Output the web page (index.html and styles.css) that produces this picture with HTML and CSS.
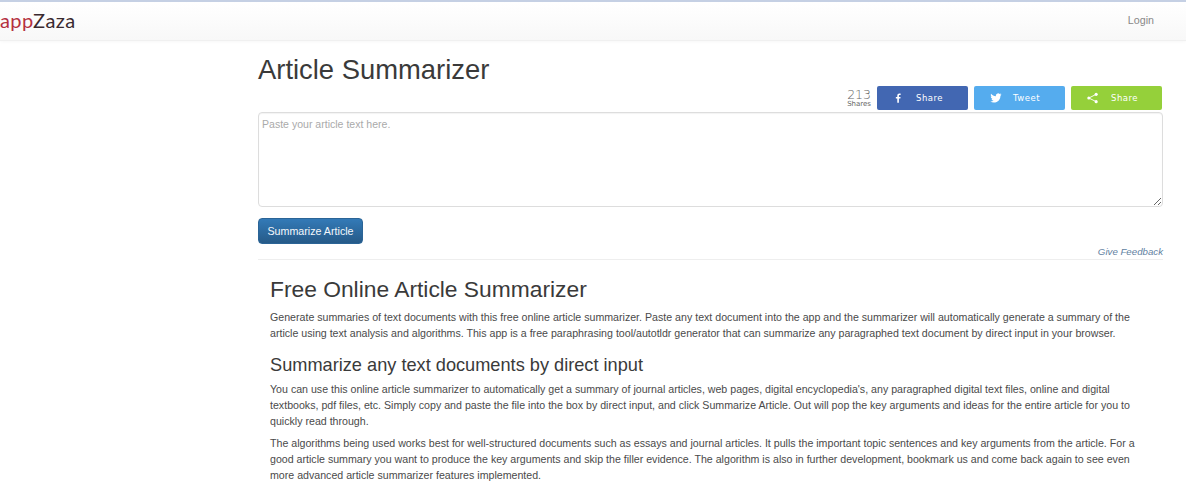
FILE: index.html
```html
<!DOCTYPE html>
<html lang="en">
<head>
<meta charset="utf-8">
<title>Article Summarizer</title>
<link rel="stylesheet" href="styles.css">
</head>
<body>
<nav class="navbar">
  <a class="brand" href="#"><span class="brand-app">app</span><span class="brand-zaza">Zaza</span></a>
  <a class="login" href="#">Login</a>
</nav>
<main class="page">
  <h1 class="title">Article Summarizer</h1>
  <div class="shares">
    <div class="count"><span class="count-num">213</span><span class="count-label">Shares</span></div>
    <a class="share share-fb" href="#">
      <svg class="icon" viewBox="0 0 10 16" width="6" height="10"><path fill="#fff" d="M6.5 16V9h2.400l.4-2.800H6.500V4.500c0-.8.3-1.400 1.400-1.400h1.500V.6C9.100.5 8.300.5 7.400.5 5.300.5 3.800 1.800 3.800 4.100v2.100H1.400V9h2.400v7z"/></svg>
      <span>Share</span>
    </a>
    <a class="share share-tw" href="#">
      <svg class="icon" viewBox="0 0 24 24" width="12" height="12"><path fill="#fff" d="M23 4.900c-.8.400-1.700.600-2.600.700.900-.600 1.700-1.400 2-2.500-.900.500-1.900.900-2.900 1.100A4.600 4.600 0 0 0 11.700 8.400C7.900 8.200 4.500 6.400 2.200 3.600c-1.200 2.100-.6 4.800 1.400 6.100-.7 0-1.400-.2-2.100-.6 0 2.200 1.600 4.100 3.700 4.600-.7.200-1.400.2-2.100.1.600 1.900 2.300 3.200 4.300 3.200A9.300 9.300 0 0 1 .6 19c2.100 1.300 4.500 2.100 7.100 2.100 8.600 0 13.400-7.200 13.100-13.700.9-.7 1.700-1.500 2.200-2.500z"/></svg>
      <span>Tweet</span>
    </a>
    <a class="share share-all" href="#">
      <svg class="icon" viewBox="0 0 12 12" width="11" height="12"><circle cx="10" cy="2" r="1.700" fill="#fff"/><circle cx="10" cy="10" r="1.700" fill="#fff"/><circle cx="2" cy="6" r="1.700" fill="#fff"/><path d="M10 2 2 6l8 4" fill="none" stroke="#fff" stroke-width="1"/></svg>
      <span>Share</span>
    </a>
  </div>
  <textarea class="input" placeholder="Paste your article text here."></textarea>
  <button class="btn" type="button">Summarize Article</button>
  <div class="feedback"><a href="#">Give Feedback</a></div>
  <section class="about">
    <h2>Free Online Article Summarizer</h2>
    <p>Generate summaries of text documents with this free online article summarizer. Paste any text document into the app and the summarizer will automatically generate a summary of the article using text analysis and algorithms. This app is a free paraphrasing tool/autotldr generator that can summarize any paragraphed text document by direct input in your browser.</p>
    <h3>Summarize any text documents by direct input</h3>
    <p>You can use this online article summarizer to automatically get a summary of journal articles, web pages, digital encyclopedia's, any paragraphed digital text files, online and digital textbooks, pdf files, etc. Simply copy and paste the file into the box by direct input, and click Summarize Article. Out will pop the key arguments and ideas for the entire article for you to quickly read through.</p>
    <p>The algorithms being used works best for well-structured documents such as essays and journal articles. It pulls the important topic sentences and key arguments from the article. For a good article summary you want to produce the key arguments and skip the filler evidence. The algorithm is also in further development, bookmark us and come back again to see even more advanced article summarizer features implemented.</p>
  </section>
</main>
</body>
</html>
```
FILE: styles.css
```css
* { box-sizing: border-box; }
html, body { margin: 0; height: 491px; overflow: hidden; }
body {
  background: #fff;
  color: #4a4a4a;
  font-family: "Liberation Sans", Arial, sans-serif;
  font-size: 12px;
  line-height: 16px;
}
a { text-decoration: none; }

.navbar {
  height: 41px;
  display: flex;
  align-items: center;
  justify-content: space-between;
  padding-right: 32px;
  border-top: 2px solid #c5d0e4;
  border-bottom: 1px solid #f0f0f0;
  background: linear-gradient(#fff, #f8f8f8);
  box-shadow: 0 1px 3px rgba(0,0,0,.03);
}
.brand { font-family: "Lato", sans-serif; font-size: 20px; line-height: 24px; letter-spacing: .4px; margin-bottom: 3px; }
.brand-app { color: #b5303f; }
.brand-zaza { color: #3a2a30; }
.login { color: #888; font-size: 10.700px; margin-bottom: 2px; }

.page { width: 905px; margin-left: 258px; }
.title {
  margin: 13px 0 0;
  font-size: 27.400px;
  font-weight: 400;
  line-height: 32px;
  color: #3a3a3a;
}
.shares { display: flex; justify-content: flex-end; align-items: center; gap: 6px; height: 24px; margin-right: 1px; }
.count { display: flex; flex-direction: column; align-items: center; color: #666; }
.count-num { font-family: "DejaVu Sans", sans-serif; font-size: 12.500px; line-height: 13px; font-weight: 300; }
.count-label { font-family: "DejaVu Sans", sans-serif; font-size: 7px; line-height: 7px; }
.share {
  width: 91px;
  height: 24px;
  border-radius: 2px;
  color: #fff;
  font-family: "DejaVu Sans", sans-serif;
  font-size: 8.500px;
  letter-spacing: .5px;
  display: flex;
  align-items: center;
  gap: 15px;
  padding-left: 18px;
}
.share-fb { background: #4267b2; }
.share-tw { background: #55acee; gap: 11px; padding-left: 16px; }
.share-all { background: #95d03a; gap: 13px; padding-left: 16px; }
.icon { flex: none; }

.input {
  display: block;
  width: 100%;
  height: 95px;
  margin-top: 2px;
  padding: 3px 3px;
  border: 1px solid #ddd;
  border-radius: 4px;
  font: 10.550px/16px "Liberation Sans", Arial, sans-serif;
  box-shadow: inset 0 1px 1px rgba(0,0,0,.05);
}
.input::placeholder { color: #aaa; }
.btn {
  display: block;
  margin-top: 11px;
  width: 105px;
  height: 26px;
  padding: 0;
  border: 1px solid #2b6496;
  border-radius: 4px;
  background: linear-gradient(#337ab7, #265a88);
  color: #f4f8fb;
  font: 10.700px "Liberation Sans", Arial, sans-serif;
}
.feedback { text-align: right; font-size: 9.700px; font-style: italic; line-height: 14px; margin-top: 1px; }
.feedback a { color: #5f7f9f; }
.about { margin-top: 0; padding: 0 11px 0 12px; border-top: 1px solid #eee; }
.about h2 { margin: 15px 0 0; font-size: 22.800px; font-weight: 400; line-height: 28px; color: #3a3a3a; }
.about h3 { margin: 14px 0 0; font-size: 18.200px; font-weight: 400; line-height: 20px; color: #3a3a3a; }
.about p { margin: 6px 0 0; font-size: 10.640px; }
```
